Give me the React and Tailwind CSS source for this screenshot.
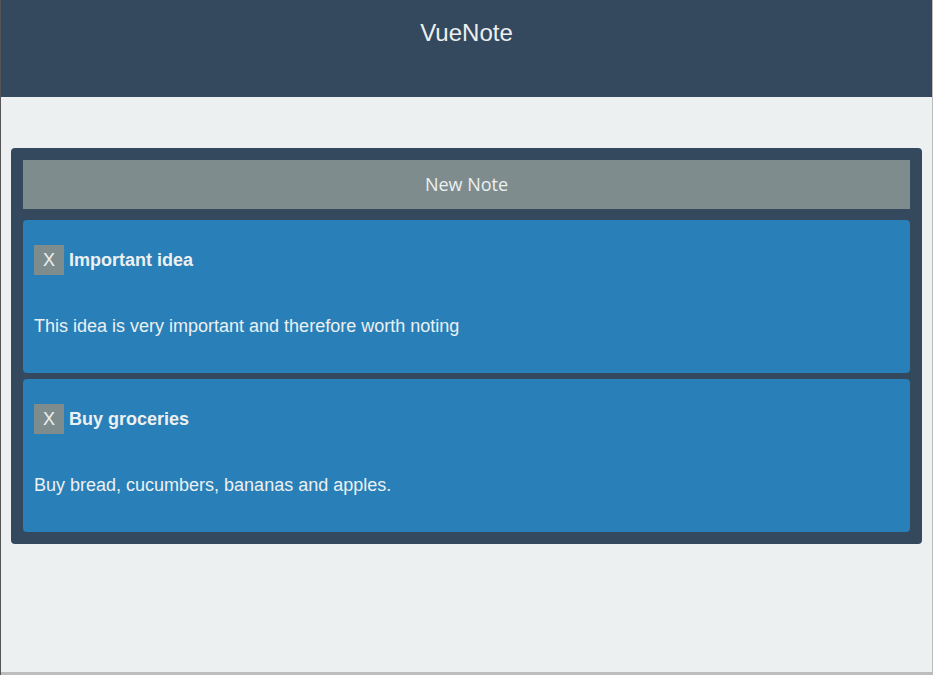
import { useState } from "react";

const INITIAL_NOTES = [
  { id: 1, title: "Important idea", body: "This idea is very important and therefore worth noting" },
  { id: 2, title: "Buy groceries", body: "Buy bread, cucumbers, bananas and apples." },
];

export default function App() {
  const [notes, setNotes] = useState(INITIAL_NOTES);

  const addNote = () => {
    setNotes((prev) => [...prev, { id: Date.now(), title: "New note", body: "" }]);
  };

  const removeNote = (id) => {
    setNotes((prev) => prev.filter((n) => n.id !== id));
  };

  return (
    <div className="w-[933px] h-[675px] bg-[#bdbdbd] overflow-hidden border-l border-[#555]">
      <div className="w-[931px] h-[672px] bg-[#ecf0f1] font-['Liberation_Sans',Arial,sans-serif]">
        {/* Header */}
        <header className="h-[97px] bg-[#34495e] text-[#ecf0f1] text-center pt-[17px] text-2xl">
          VueNote
        </header>

        {/* Notes panel */}
        <main className="pt-[51px] pl-[10px] pr-[10px]">
          <div className="bg-[#34495e] rounded p-3 flex flex-col">
            <button
              onClick={addNote}
              className="h-[49px] bg-[#7f8c8d] text-[#ecf0f1] text-[18px] font-['Open_Sans',sans-serif] mb-[11px]"
            >
              New Note
            </button>

            <div className="flex flex-col gap-[6px]">
              {notes.map((note) => (
                <div key={note.id} className="bg-[#2980b9] rounded-sm h-[153px] px-[11px] pt-[25px] text-[#ecf0f1]">
                  <div className="flex items-center gap-[5px]">
                    <button
                      onClick={() => removeNote(note.id)}
                      className="w-[30px] h-[30px] bg-[#7f8c8d] text-[#ecf0f1] text-lg flex items-center justify-center"
                    >
                      X
                    </button>
                    <span className="font-bold text-[18px]">{note.title}</span>
                  </div>
                  <p className="mt-[38px] text-[18px]">{note.body}</p>
                </div>
              ))}
            </div>
          </div>
        </main>
      </div>
    </div>
  );
}
